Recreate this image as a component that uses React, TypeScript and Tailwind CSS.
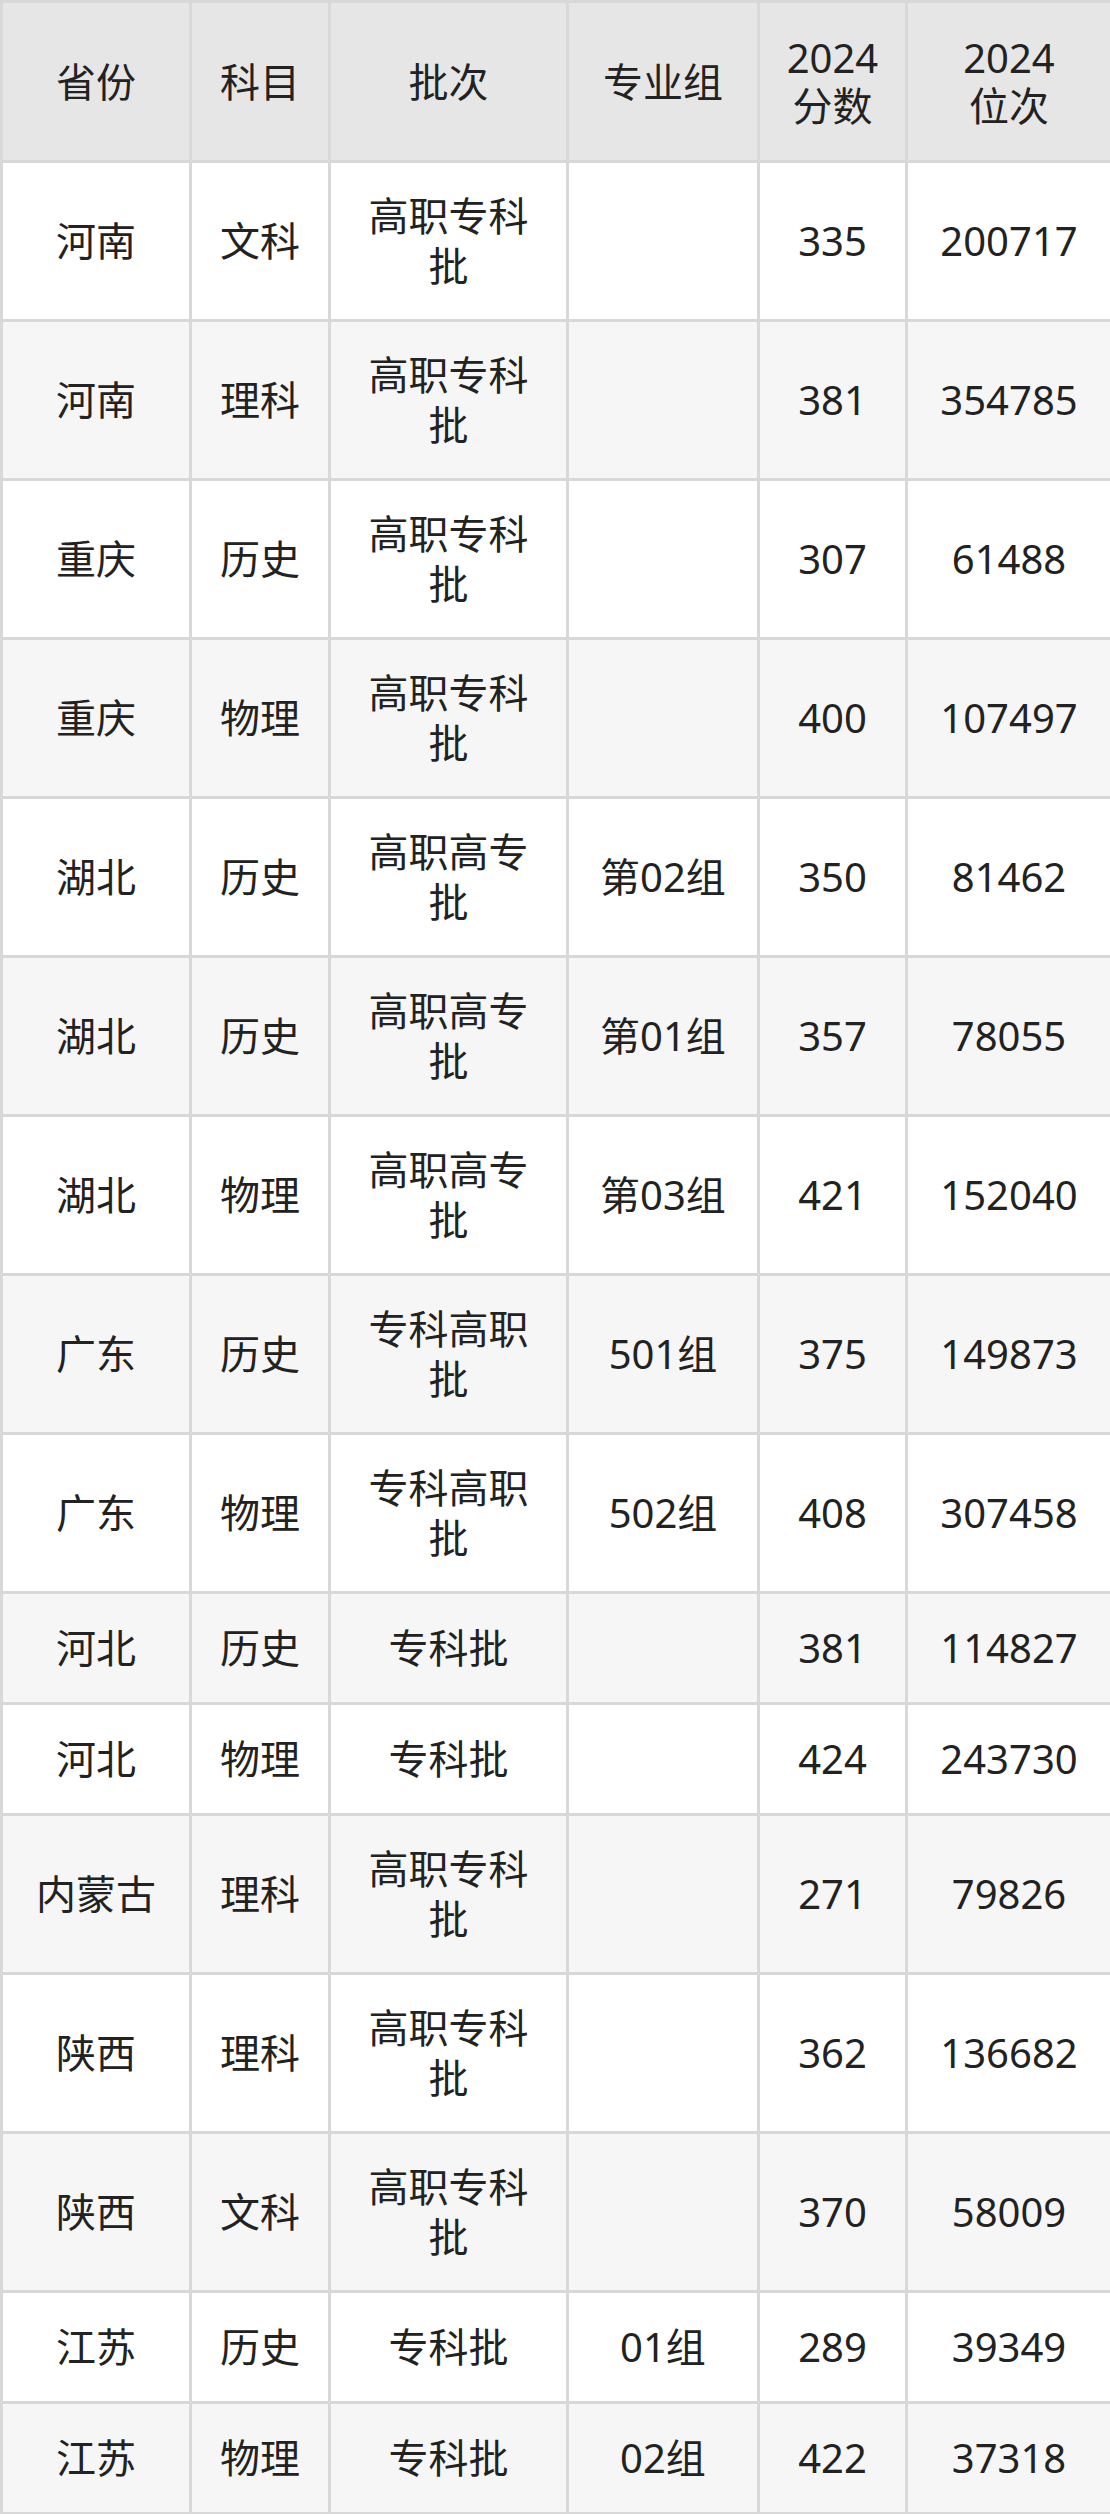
import React from 'react';

type Row = { prov: string; subj: string; batch: string; group: string; score: string; rank: string };

const rows: Row[] = [
  { prov: '河南', subj: '文科', batch: '高职专科批', group: '', score: '335', rank: '200717' },
  { prov: '河南', subj: '理科', batch: '高职专科批', group: '', score: '381', rank: '354785' },
  { prov: '重庆', subj: '历史', batch: '高职专科批', group: '', score: '307', rank: '61488' },
  { prov: '重庆', subj: '物理', batch: '高职专科批', group: '', score: '400', rank: '107497' },
  { prov: '湖北', subj: '历史', batch: '高职高专批', group: '第02组', score: '350', rank: '81462' },
  { prov: '湖北', subj: '历史', batch: '高职高专批', group: '第01组', score: '357', rank: '78055' },
  { prov: '湖北', subj: '物理', batch: '高职高专批', group: '第03组', score: '421', rank: '152040' },
  { prov: '广东', subj: '历史', batch: '专科高职批', group: '501组', score: '375', rank: '149873' },
  { prov: '广东', subj: '物理', batch: '专科高职批', group: '502组', score: '408', rank: '307458' },
  { prov: '河北', subj: '历史', batch: '专科批', group: '', score: '381', rank: '114827' },
  { prov: '河北', subj: '物理', batch: '专科批', group: '', score: '424', rank: '243730' },
  { prov: '内蒙古', subj: '理科', batch: '高职专科批', group: '', score: '271', rank: '79826' },
  { prov: '陕西', subj: '理科', batch: '高职专科批', group: '', score: '362', rank: '136682' },
  { prov: '陕西', subj: '文科', batch: '高职专科批', group: '', score: '370', rank: '58009' },
  { prov: '江苏', subj: '历史', batch: '专科批', group: '01组', score: '289', rank: '39349' },
  { prov: '江苏', subj: '物理', batch: '专科批', group: '02组', score: '422', rank: '37318' },
];

const cell = 'border-[3px] border-[#d8d8d8] px-5 text-center align-middle';

export default function App() {
  return (
    <div
      className="w-[1110px] bg-white text-[40px] leading-[50px] text-[#222222]"
      style={{ fontFamily: '"Noto Sans", "Noto Sans CJK SC", sans-serif' }}
    >
      <table className="w-[1110px] table-fixed border-collapse">
        <colgroup>
          <col className="w-[189px]" />
          <col className="w-[139px]" />
          <col className="w-[238px]" />
          <col className="w-[191px]" />
          <col className="w-[148px]" />
          <col className="w-[205px]" />
        </colgroup>
        <thead>
          <tr className="h-[160px] bg-[#e6e6e6]">
            <th className={cell + ' font-normal'}>省份</th>
            <th className={cell + ' font-normal'}>科目</th>
            <th className={cell + ' font-normal'}>批次</th>
            <th className={cell + ' font-normal'}>专业组</th>
            <th className={cell + ' font-normal leading-[48px]'}>
              2024
              <br />
              分数
            </th>
            <th className={cell + ' font-normal leading-[48px]'}>
              2024
              <br />
              位次
            </th>
          </tr>
        </thead>
        <tbody>
          {rows.map((r, i) => {
            const tall = r.batch.length > 3;
            return (
              <tr
                key={i}
                className={(tall ? 'h-[159px] ' : 'h-[111px] ') + (i % 2 === 1 ? 'bg-[#f6f6f6]' : 'bg-white')}
              >
                <td className={cell}>{r.prov}</td>
                <td className={cell}>{r.subj}</td>
                <td className={cell}>
                  {tall ? (
                    <>
                      {r.batch.slice(0, 4)}
                      <br />
                      {r.batch.slice(4)}
                    </>
                  ) : (
                    r.batch
                  )}
                </td>
                <td className={cell}>{r.group}</td>
                <td className={cell}>{r.score}</td>
                <td className={cell}>{r.rank}</td>
              </tr>
            );
          })}
        </tbody>
      </table>
    </div>
  );
}
